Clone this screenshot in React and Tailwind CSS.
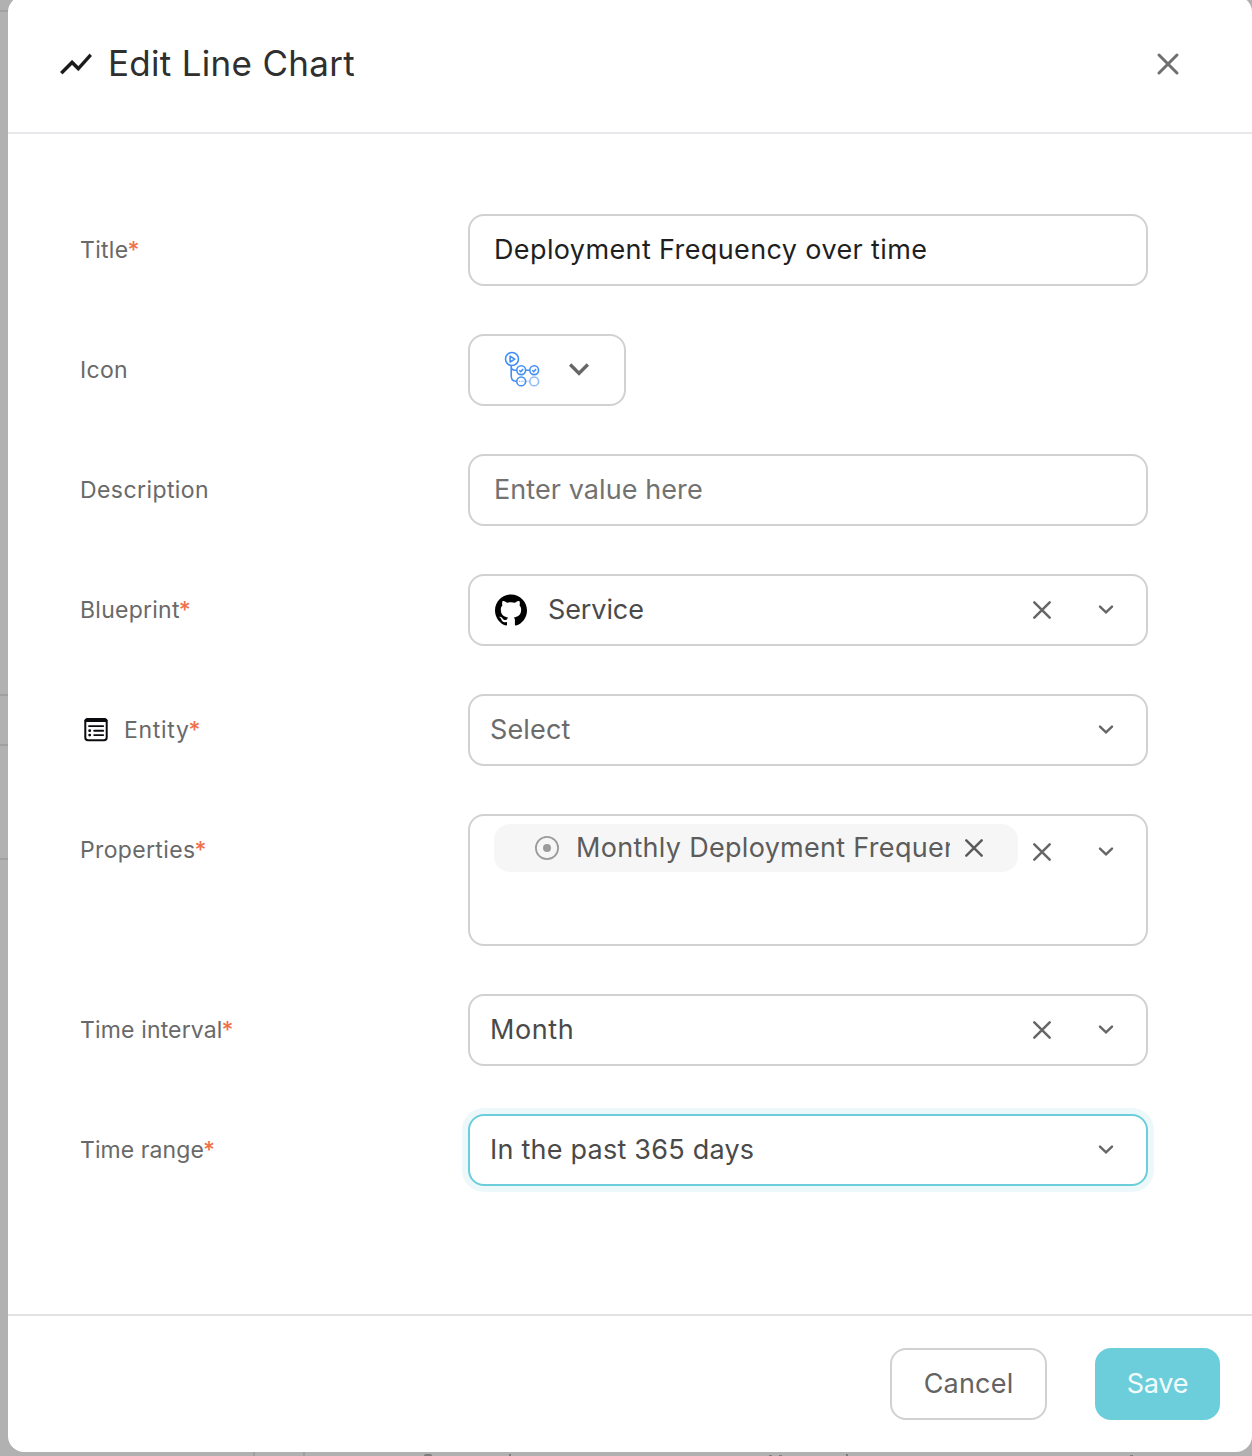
function CloseIcon({ className = "size-6 text-[#666666]", width = 2.5 }) {
  return (
    <svg className={"shrink-0 " + className} viewBox="0 0 24 24" fill="none" stroke="currentColor" strokeWidth={width} strokeLinecap="round">
      <path d="M4.3 4.3 19.7 19.7M19.7 4.3 4.3 19.7" />
    </svg>
  );
}

function ChevronIcon() {
  return (
    <svg className="h-5 w-5 shrink-0 text-[#666666]" viewBox="0 0 20 20" fill="none" stroke="currentColor" strokeWidth="2.4" strokeLinecap="round">
      <path d="M4 6.6 10 12.4 16 6.6" />
    </svg>
  );
}

function ExpandIcon() {
  return (
    <svg className="size-10 shrink-0 text-[#666666]" viewBox="0 0 24 24" fill="currentColor">
      <path d="M16.59 8.59 12 13.17 7.41 8.59 6 10l6 6 6-6z" />
    </svg>
  );
}

function LineChartIcon() {
  return (
    <svg className="size-[38px] shrink-0 text-[#1a1a1a]" viewBox="0 0 24 24" fill="currentColor" stroke="currentColor" strokeWidth="0.15">
      <path d="m3.5 18.49 6-6.01 4 4L22 6.92l-1.41-1.41-7.09 7.97-4-4L2 16.99z" />
    </svg>
  );
}

function WorkflowIcon() {
  return (
    <svg className="h-[37px] w-9 shrink-0" viewBox="0 0 36 37" fill="none" stroke="#438ff5" strokeWidth="1.6">
      <circle cx="8" cy="8" r="6.5" />
      <path d="M6.1 5.2v5.8l4.7-2.9z" strokeLinejoin="round" />
      <path d="M7.2 14.5v10.3q0 5.4 4.6 5.4h1M7.2 15.5q0 3.7 4 3.7h1.6M21.5 19.2h4" />
      <circle cx="17.2" cy="19.2" r="4.4" />
      <path d="m15.3 19.3 1.4 1.4 2.4-2.6" />
      <circle cx="30.2" cy="19.2" r="4.4" />
      <path d="m28.3 19.3 1.4 1.4 2.4-2.6" />
      <circle cx="17.2" cy="30.4" r="4.4" />
      <path d="M14.9 30.4h1.2M16.8 30.4h0.9M18.4 30.4h1.2" strokeWidth="1.2" strokeOpacity="0.6" />
      <path d="M22 30.4h3.6" strokeDasharray="1.4 0.9" strokeOpacity="0.4" />
      <circle cx="30.2" cy="30.4" r="4.4" stroke="#8fbdfa" />
    </svg>
  );
}

function GithubIcon() {
  return (
    <svg className="size-8 shrink-0 text-black" viewBox="0 0 24 24" fill="currentColor">
      <path d="M12 .297c-6.63 0-12 5.373-12 12 0 5.303 3.438 9.8 8.205 11.385.6.113.82-.258.82-.577 0-.285-.01-1.04-.015-2.04-3.338.724-4.042-1.61-4.042-1.61C4.422 18.07 3.633 17.7 3.633 17.7c-1.087-.744.084-.729.084-.729 1.205.084 1.838 1.236 1.838 1.236 1.07 1.835 2.809 1.305 3.495.998.108-.776.417-1.305.76-1.605-2.665-.3-5.466-1.332-5.466-5.93 0-1.31.465-2.38 1.235-3.22-.135-.303-.54-1.523.105-3.176 0 0 1.005-.322 3.3 1.23.96-.267 1.98-.399 3-.405 1.02.006 2.04.138 3 .405 2.28-1.552 3.285-1.23 3.285-1.23.645 1.653.24 2.873.12 3.176.765.84 1.23 1.91 1.23 3.22 0 4.61-2.805 5.625-5.475 5.92.42.36.81 1.096.81 2.22 0 1.606-.015 2.896-.015 3.286 0 .315.21.69.825.57C20.565 22.092 24 17.592 24 12.297c0-6.627-5.373-12-12-12" />
    </svg>
  );
}

function EntityIcon() {
  return (
    <svg className="mr-4 ml-1 size-6 shrink-0" viewBox="0 0 24 24" fill="none" stroke="#0b0b0f" strokeWidth="2" strokeLinecap="round">
      <rect x="1.3" y="0.9" width="21.4" height="21.4" rx="2.8" />
      <path d="M2 2.4h20" strokeWidth="3" />
      <path d="M5 8.1h14.2M10.2 12.7h9M10.2 17.1h9" strokeWidth="1.9" />
      <path d="M5.6 12.7h.2M5.6 17.1h.2" strokeWidth="2.7" />
    </svg>
  );
}

function TargetIcon() {
  return (
    <svg className="size-6 shrink-0" viewBox="0 0 24 24" fill="none">
      <circle cx="12" cy="12" r="11.1" stroke="#9b9b9b" strokeWidth="1.8" />
      <circle cx="12" cy="12" r="4" fill="#9b9b9b" />
    </svg>
  );
}

function Field({ label, tracking, required, icon, children }) {
  return (
    <div className="flex items-start">
      <div className="flex h-[72px] w-[388px] shrink-0 items-center text-[23px] text-[#696969]">
        {icon}
        <span className={tracking}>{label}</span>
        {required && <span className="-ml-px font-medium text-[#f0704a]">*</span>}
      </div>
      {children}
    </div>
  );
}

function Select({ children, clearable, focused }) {
  return (
    <div
      className={
        "flex h-[72px] w-[680px] items-center rounded-2xl border-2 bg-white pr-[30px] pl-5 text-[27px] " +
        (focused ? "border-[#6ccddb] ring-[6px] ring-[#ecf8fa]" : "border-[#d1d1d1]")
      }
    >
      <div className="flex flex-1 items-center text-[#4a4a4a]">{children}</div>
      {clearable && <CloseIcon className="mr-[42px] size-6 text-[#666666]" />}
      <ChevronIcon />
    </div>
  );
}

const inputClass = "flex h-[72px] w-[680px] items-center rounded-2xl border-2 border-[#d1d1d1] pl-6 text-[27px]";

function BackdropEdge() {
  return (
    <div className="flex w-2 shrink-0 flex-col">
      <div className="mt-[10px] h-[2px] bg-[#a0a0a0]" />
      <div className="mt-[682px] h-[2px] bg-[#a0a0a0]" />
      <div className="mt-12 h-[2px] bg-[#a0a0a0]" />
      <div className="mt-[112px] h-[2px] bg-[#a0a0a0]" />
    </div>
  );
}

function BackdropStrip() {
  return (
    <div className="flex h-1 shrink-0 items-end">
      <div className="ml-[245px] h-1 w-[2px] bg-[#a0a0a0]" />
      <div className="ml-12 h-1 w-[2px] bg-[#a0a0a0]" />
      <div className="ml-[119px] h-[2px] w-2 rounded-t-full bg-[#7d7d7d]" />
      <div className="ml-[77px] h-[2px] w-[2px] bg-[#7d7d7d]" />
      <div className="ml-[258px] h-px w-[3px] bg-[#7d7d7d]" />
      <div className="ml-[7px] h-px w-[3px] bg-[#7d7d7d]" />
      <div className="ml-[64px] h-[2px] w-[2px] bg-[#7d7d7d]" />
      <div className="ml-[282px] h-px w-[3px] bg-[#7d7d7d]" />
    </div>
  );
}

export default function App() {
  return (
    <div className="flex h-[1456px] w-[1252px] overflow-hidden bg-[#b1b1b1] font-['Inter','Liberation_Sans',sans-serif]">
      <BackdropEdge />
      <div className="flex min-w-0 flex-1 flex-col">
        <div className="-mt-1 flex flex-1 flex-col rounded-2xl bg-white">
          <header className="flex h-[138px] items-center border-b-2 border-[#e8e9ed] pr-[70px] pl-[49px]">
            <LineChartIcon />
            <h1 className="ml-[13px] flex-1 pb-0.5 text-[35px] tracking-[0.3px] text-[#2f2f2f]">Edit Line Chart</h1>
            <CloseIcon className="size-7 text-[#6f6f6f]" width={2.6} />
          </header>

          <main className="flex flex-1 flex-col gap-12 pt-20 pl-[72px]">
            <Field label="Title" tracking="tracking-[0.3px]" required>
              <div className={inputClass}>
                <span className="tracking-[0.38px] text-[#1f1f1f]">Deployment Frequency over time</span>
              </div>
            </Field>

            <Field label="Icon" tracking="tracking-[0.3px]">
              <div className="flex h-[72px] w-[158px] items-center rounded-2xl border-2 border-[#d1d1d1] pb-0.5 pl-[34px]">
                <WorkflowIcon />
                <div className="ml-[19px] flex">
                  <ExpandIcon />
                </div>
              </div>
            </Field>

            <Field label="Description" tracking="tracking-[0.42px]">
              <div className={inputClass}>
                <span className="tracking-[0.08px] text-[#727272]">Enter value here</span>
              </div>
            </Field>

            <Field label="Blueprint" tracking="tracking-[0.26px]" required>
              <Select clearable>
                <div className="ml-[5px] flex items-center gap-[21px]">
                  <GithubIcon />
                  <span className="tracking-[-0.1px]">Service</span>
                </div>
              </Select>
            </Field>

            <Field label="Entity" tracking="tracking-[0.7px]" required icon={<EntityIcon />}>
              <Select>
                <span className="tracking-[0.15px] text-[#6b6b6b]">Select</span>
              </Select>
            </Field>

            <Field label="Properties" tracking="tracking-[0.35px]" required>
              <div className="flex h-[132px] w-[680px] items-start rounded-2xl border-2 border-[#d1d1d1] pt-2 pr-[30px] pl-6 text-[27px]">
                <div className="flex h-12 w-[524px] items-center rounded-2xl bg-[#f6f6f6] pl-[41px] text-[#5c5c5c]">
                  <TargetIcon />
                  <span className="ml-[17px] w-[374px] overflow-hidden whitespace-nowrap tracking-[0.3px]">
                    Monthly Deployment Frequency
                  </span>
                  <CloseIcon className="ml-3 size-6 text-[#5c5c5c]" />
                </div>
                <div className="ml-3 flex h-14 items-center">
                  <CloseIcon className="mr-[42px] size-6 text-[#666666]" />
                  <ChevronIcon />
                </div>
              </div>
            </Field>

            <Field label="Time interval" tracking="tracking-[0.15px]" required>
              <Select clearable>
                <span className="tracking-[0.6px]">Month</span>
              </Select>
            </Field>

            <Field label="Time range" tracking="tracking-[0.08px]" required>
              <Select focused>
                <span className="tracking-[0.23px]">In the past 365 days</span>
              </Select>
            </Field>
          </main>

          <footer className="flex h-[138px] items-center justify-end gap-12 border-t-2 border-[#e2e2e2] pr-8 text-[27px]">
            <button className="flex h-[72px] w-[157px] items-center justify-center rounded-2xl border-2 border-[#d1d1d1] tracking-[0.2px] text-[#636363]">
              Cancel
            </button>
            <button className="flex h-[72px] w-[125px] items-center justify-center rounded-2xl bg-[#6dcedb] tracking-[-0.25px] text-[#f3fcfd]">
              Save
            </button>
          </footer>
        </div>
        <BackdropStrip />
      </div>
    </div>
  );
}
